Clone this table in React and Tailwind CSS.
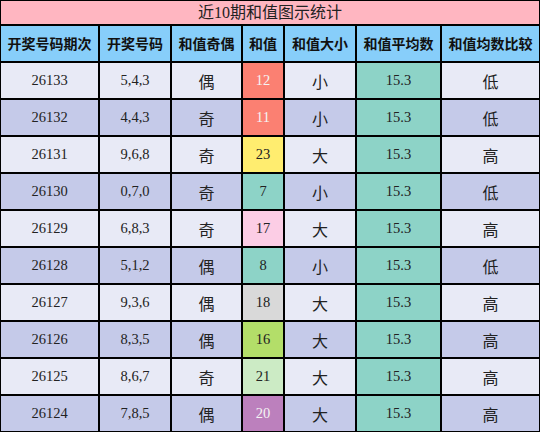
const rows = [
  { id: '26133', nums: '5,4,3', parity: '偶', sum: '12', sumBg: 'bg-[#fb8072] text-[#f4f4f4]', size: '小', cmp: '低' },
  { id: '26132', nums: '4,4,3', parity: '奇', sum: '11', sumBg: 'bg-[#fb8072] text-[#f4f4f4]', size: '小', cmp: '低' },
  { id: '26131', nums: '9,6,8', parity: '奇', sum: '23', sumBg: 'bg-[#ffed6f] text-[#222]', size: '大', cmp: '高' },
  { id: '26130', nums: '0,7,0', parity: '奇', sum: '7', sumBg: 'bg-[#8dd3c7] text-[#222]', size: '小', cmp: '低' },
  { id: '26129', nums: '6,8,3', parity: '奇', sum: '17', sumBg: 'bg-[#fccde5] text-[#222]', size: '大', cmp: '高' },
  { id: '26128', nums: '5,1,2', parity: '偶', sum: '8', sumBg: 'bg-[#8dd3c7] text-[#222]', size: '小', cmp: '低' },
  { id: '26127', nums: '9,3,6', parity: '偶', sum: '18', sumBg: 'bg-[#d9d9d9] text-[#222]', size: '大', cmp: '高' },
  { id: '26126', nums: '8,3,5', parity: '偶', sum: '16', sumBg: 'bg-[#b3de69] text-[#222]', size: '大', cmp: '高' },
  { id: '26125', nums: '8,6,7', parity: '奇', sum: '21', sumBg: 'bg-[#ccebc5] text-[#222]', size: '大', cmp: '高' },
  { id: '26124', nums: '7,8,5', parity: '偶', sum: '20', sumBg: 'bg-[#bc80bd] text-[#f4f4f4]', size: '大', cmp: '高' },
];

const headers = ['开奖号码期次', '开奖号码', '和值奇偶', '和值', '和值大小', '和值平均数', '和值均数比较'];

const num = "font-['Liberation_Serif','Noto_Sans_CJK_SC',serif] text-[14.5px]";
const cjk = "font-['Noto_Sans_CJK_SC',sans-serif] text-[16px]";

export default function App() {
  return (
    <div className="w-[540px] h-[432px] bg-black p-px grid gap-[2px] grid-cols-[97px_70px_69px_40px_70px_83px_97px] grid-rows-[23px_35px_repeat(10,35px)] text-[#222]">
      {/* title */}
      <div className="col-span-7 bg-[#ffb6c1] flex items-center justify-center font-['Liberation_Serif','Noto_Sans_CJK_SC',serif] text-[16px] leading-none">
        近10期和值图示统计
      </div>

      {headers.map((h) => (
        <div key={h} className="bg-[#87cefa] flex items-center justify-center font-['Noto_Sans_CJK_SC',sans-serif] font-bold text-[14px] text-[#111] whitespace-nowrap">
          {h}
        </div>
      ))}

      {rows.map((r, i) => {
        const bg = i % 2 === 0 ? 'bg-[#e8eaf6]' : 'bg-[#c5cae9]';
        return [
          <div key={r.id + 'a'} className={`${bg} ${num} flex items-center justify-center`}>{r.id}</div>,
          <div key={r.id + 'b'} className={`${bg} ${num} flex items-center justify-center`}>{r.nums}</div>,
          <div key={r.id + 'c'} className={`${bg} ${cjk} flex items-center justify-center`}>{r.parity}</div>,
          <div key={r.id + 'd'} className={`${r.sumBg} ${num} flex items-center justify-center`}>{r.sum}</div>,
          <div key={r.id + 'e'} className={`${bg} ${cjk} flex items-center justify-center`}>{r.size}</div>,
          <div key={r.id + 'f'} className={`bg-[#8dd3c7] ${num} flex items-center justify-center`}>15.3</div>,
          <div key={r.id + 'g'} className={`${bg} ${cjk} flex items-center justify-center`}>{r.cmp}</div>,
        ];
      })}
    </div>
  );
}
